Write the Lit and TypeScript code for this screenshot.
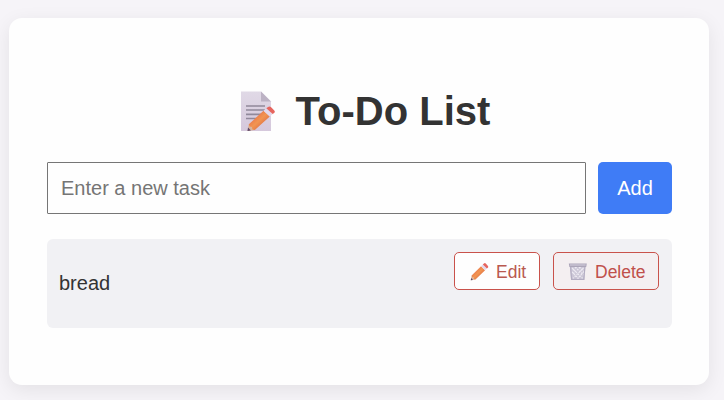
import { LitElement, html, svg, css } from "lit";
import { customElement, state } from "lit/decorators.js";

const pencil = svg`
  <path d="M0 0 1.3 -6.7 7.3 -1Z" fill="#d9b49b"/>
  <path d="M0 0 .5 -3.4 3.4 -.6Z" fill="#5b4668"/>
  <path d="M1.3 -6.7 16 -20.2 22.3 -14.4 7.3 -1 5 -1.6 4.3 -3.9 2 -4.4Z" fill="url(#wood)"/>
  <path d="M16 -20.2 18.8 -22.7 25.2 -17 22.3 -14.4Z" fill="#e3d9ec"/>
  <path d="M18.8 -22.7 20.6 -24.1Q22 -25.2 23.4 -23.9L26.8 -20.6Q28 -19.3 26.9 -18.2L25.2 -16.9Z" fill="#e6655e"/>`;

const woodGradient = svg`
  <linearGradient id="wood" x1="0.25" y1="0.25" x2="0.75" y2="0.75">
    <stop offset="0" stop-color="#e8754c"/>
    <stop offset="0.5" stop-color="#f29551"/>
    <stop offset="1" stop-color="#df7145"/>
  </linearGradient>`;

@customElement("app-root")
export class AppRoot extends LitElement {
  static styles = css`
    :host {
      display: block;
      box-sizing: border-box;
      height: 400px;
      padding: 18px 15px 15px 9px;
      overflow: hidden;
      background: #f6f4f8;
      color: #333;
      font-family: Arial, "Liberation Sans", sans-serif;
      font-size: 20px;
    }
    * { box-sizing: border-box; }
    svg { display: block; flex: none; }
    .card {
      height: 367px;
      padding: 70px 37px 0 38px;
      border-radius: 13px;
      background: #fefefe;
      box-shadow: 0 5px 19px rgba(0, 0, 0, 0.08);
    }
    h1 {
      display: flex;
      justify-content: center;
      gap: 20px;
      height: 46px;
      margin: 0 0 28px;
      padding-left: 11px;
      font-size: 40px;
      line-height: 46px;
      white-space: nowrap;
    }
    .entry { display: flex; gap: 12px; height: 52px; }
    input {
      flex: 1;
      min-width: 0;
      padding: 0 13px;
      border: 1px solid #767676;
      border-radius: 1px;
      outline: none;
      background: #fefefe;
      font: inherit;
    }
    input::placeholder { color: #757575; }
    button { font-family: inherit; margin: 0; padding: 0; }
    .add {
      width: 74px;
      border: 0;
      border-radius: 5px;
      background: #3f7cf6;
      color: #fff;
      font-size: 20px;
    }
    ul { list-style: none; margin: 25px 0 0; padding: 0; }
    li {
      display: flex;
      justify-content: space-between;
      height: 89px;
      padding: 13px 13px 0 12px;
      border-radius: 6px;
      background: #f1f1f4;
    }
    .task { line-height: 23px; margin-top: 20px; }
    .actions { display: flex; gap: 13px; height: 38px; }
    .action {
      display: flex;
      align-items: center;
      height: 38px;
      border: 1px solid #c9524b;
      border-radius: 5px;
      background: #fefefe;
      color: #b9594f;
      font-size: 17.5px;
      line-height: 20px;
    }
    .action span { padding-top: 1px; }
    .edit { width: 86px; padding-left: 14px; gap: 5px; }
    .delete { width: 106px; padding-left: 14px; gap: 7px; background: #f4eff1; color: #c0504b; }
  `;

  @state() private tasks = ["bread"];

  render() {
    return html`
      <main class="card">
        <h1>
          <svg width="36" height="46" viewBox="0 0 36 46">
            <defs>
              ${woodGradient}
              <linearGradient id="paper" x1="0" y1="0" x2="0" y2="1">
                <stop offset="0" stop-color="#e0d9e6"/>
                <stop offset="1" stop-color="#d5c8dc"/>
              </linearGradient>
            </defs>
            <path d="M1 3.5H21L31 13.5V43H1Z" fill="url(#paper)"/>
            <path d="M21 3.5 31 13.5H21Z" fill="#bcb2c4"/>
            <path d="M6 18H25M6 22H25M6 26.3H21M6 30.5H17" stroke="#91899b" stroke-width="1.7"/>
            <g transform="translate(7.5 43)">${pencil}</g>
          </svg>
          <span>To-Do List</span>
        </h1>
        <div class="entry">
          <input type="text" placeholder="Enter a new task">
          <button class="add">Add</button>
        </div>
        <ul>
          ${this.tasks.map((task) => html`
            <li>
              <span class="task">${task}</span>
              <div class="actions">
                <button class="action edit">
                  <svg width="22" height="20" viewBox="0 0 22 20">
                    <defs>${woodGradient}</defs>
                    <g transform="translate(1.8 19.3) scale(.64 .7)">${pencil}</g>
                  </svg>
                  <span>Edit</span>
                </button>
                <button class="action delete">
                  <svg width="20" height="20" viewBox="0 0 20 20">
                    <path d="M1.7 4H17.5L16.5 19H3Z" fill="#cbc6d6"/>
                    <path d="M4 7 14.6 17.5M7.5 6 15.5 14M11.5 6 16 10.5M4 11 11 18M15.5 7 5 17.5M12 6 4.5 13.5M8 6 4 10M15.8 11 9 18"
                      stroke="#eeebf3" stroke-width="1.1" stroke-dasharray="1.6 1.1"/>
                    <path d="M2.5 5 3.6 18.4H15.8L17 5" fill="none" stroke="#b3adc2" stroke-width="1.1"/>
                    <path d="M.8 2.6H18.8L18.2 5.9H1.4Z" fill="#aca5b9"/>
                    <path d="M2 4H17.6" stroke="#d6d1df" stroke-width="1"/>
                  </svg>
                  <span>Delete</span>
                </button>
              </div>
            </li>`)}
        </ul>
      </main>`;
  }
}
